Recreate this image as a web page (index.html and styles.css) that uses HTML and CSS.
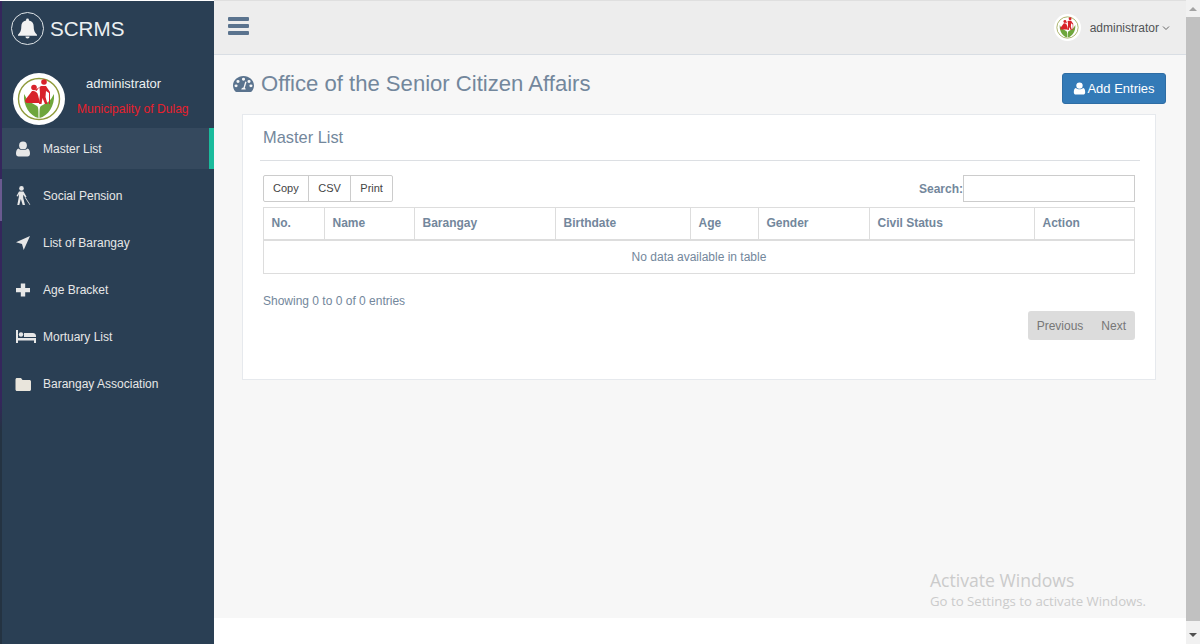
FILE: index.html
```html
<!DOCTYPE html>
<html lang="en">
<head>
  <meta charset="UTF-8" />
  <title>SCRMS</title>
  <link rel="stylesheet" href="styles.css">
</head>
<body>
  <svg class="defs" width="0" height="0">
    <symbol id="logo" viewBox="0 0 52 52">
      <circle cx="26" cy="26" r="26" fill="#fff"/>
      <circle cx="26" cy="26" r="20.500" fill="none" stroke="#8f9a3a" stroke-width="1.400"/>
      <path d="M11 21c2 3 3 6 6 8l7 4c1.500 1 1.500 4 1.500 12C17 43 10 33 11 21z" fill="#6fa63c"/>
      <path d="M41 21c-2 3-3 6-6 8l-7 4c-1.500 1-1.500 4-1.500 12C35 43 42 33 41 21z" fill="#6fa63c"/>
      <circle cx="31" cy="9" r="2.800" fill="#d8232a"/>
      <path d="M28 13h5l4 6v12h-1V20l-3-2-.5 6 2 7H32l-2.500-6-1 6H26l1-10-.5-7-3 4-1.500-1z" fill="#d8232a"/>
      <circle cx="21" cy="14.500" r="2.800" fill="#d8232a"/>
      <path d="M19 18c3-.5 5 1 6 4l2 8H14c-1.500 0-2.200-1.500-1.800-3z" fill="#d8232a"/>
    </symbol>
    <symbol id="user" viewBox="0 0 16 16">
      <circle cx="8" cy="4.400" r="3.900"/>
      <path d="M3.400 7.400C4.600 8.500 6.200 9 8 9s3.400-.5 4.600-1.600C14.400 7.900 15 10.200 15 12.800c0 1.500-1 2.700-2.500 2.700h-9C2 15.500 1 14.300 1 12.800c0-2.600.6-4.900 2.400-5.400z"/>
    </symbol>
  </svg>

  <aside class="sidebar">
    <div class="brand">
      <span class="brand-badge">
        <svg width="19" height="21" viewBox="0 0 20 21" fill="#f2f2f2"><path d="M10 0a1.500 1.500 0 0 1 1.500 1.500v.6C15 2.800 16.500 5.200 16.500 8c0 4.500 1 6.500 3.500 9v1H0v-1c2.500-2.500 3.500-4.500 3.500-9 0-2.800 1.500-5.200 5-5.900v-.6A1.500 1.500 0 0 1 10 0zM7.800 19h4.400a2.200 2 0 0 1-4.400 0z"/></svg>
      </span>
      <span class="brand-name">SCRMS</span>
    </div>
    <div class="profile">
      <svg class="profile-logo"><use href="#logo"/></svg>
      <div class="profile-text">
        <div class="profile-name">administrator</div>
        <div class="profile-town">Municipality of Dulag</div>
      </div>
    </div>
    <nav class="menu">
      <a class="menu-item active">
        <svg class="menu-icon" viewBox="0 0 16 16"><use href="#user"/></svg>
        Master List
      </a>
      <a class="menu-item">
        <svg class="menu-icon tall" viewBox="0 0 16 19"><circle cx="6.500" cy="2.400" r="2.300"/><path d="M4 5.500h4.500l3 5.200-1.300.8-2-2.800v3l1.800 7.300H7.700L5.800 13l-1.500 6H2.300l1.500-8V8L2.800 10.500 1.500 10z"/><path d="M10.500 11.200l4.800 7.500-.6.300-5-7.400z"/></svg>
        Social Pension
      </a>
      <a class="menu-item">
        <svg class="menu-icon" viewBox="0 0 16 16"><path d="M15 1L8.700 15 7 9 1 7.300z"/></svg>
        List of Barangay
      </a>
      <a class="menu-item">
        <svg class="menu-icon" viewBox="0 0 16 16"><path d="M5.800 1.500h4.400V6H15v4.200h-4.800v4.300H5.800v-4.300H1V6h4.800z"/></svg>
        Age Bracket
      </a>
      <a class="menu-item">
        <svg class="menu-icon wide" viewBox="0 0 20 14"><path d="M0 0h2v8h18v5h-2v-2.500H2V13H0z"/><circle cx="5" cy="4.500" r="2.200"/><path d="M8 3h9c1.500 0 3 1 3 3v1H8z"/></svg>
        Mortuary List
      </a>
      <a class="menu-item">
        <svg class="menu-icon folder" viewBox="0 0 16 16"><path d="M.5 3.500C.5 2.700 1.100 2 2 2h4l1.500 2H14.500c.8 0 1.500.7 1.500 1.500v8c0 .8-.7 1.500-1.500 1.500H2c-.9 0-1.500-.7-1.500-1.500z"/></svg>
        Barangay Association
      </a>
    </nav>
  </aside>

  <div class="main">
    <header class="topbar">
      <div class="burger"><span></span><span></span><span></span></div>
      <div class="account">
        <svg class="account-logo"><use href="#logo"/></svg>
        <span>administrator</span>
        <svg class="caret" width="8" height="6" viewBox="0 0 8 6"><path d="M1 1.500l3 3 3-3" fill="none" stroke="#666" stroke-width="1"/></svg>
      </div>
    </header>

    <section class="content">
      <div class="page-title">
        <h1>
          <svg class="gauge" viewBox="0 0 24 20" preserveAspectRatio="none"><path fill-rule="evenodd" d="M12 0C5.400 0 0 5.400 0 12c0 2.700.9 5.200 2.400 7.200.4.500.9.800 1.600.8h16c.7 0 1.200-.3 1.600-.8C23.100 17.200 24 14.700 24 12 24 5.400 18.600 0 12 0zM12 2.200a1.800 1.800 0 1 1 0 3.600 1.800 1.800 0 0 1 0-3.600zM5.700 5a1.800 1.800 0 1 1 0 3.600 1.800 1.800 0 0 1 0-3.600zM18.300 5a1.800 1.800 0 1 1 0 3.600 1.800 1.800 0 0 1 0-3.600zM3.500 10.500a1.800 1.800 0 1 1 0 3.600 1.800 1.800 0 0 1 0-3.600zM20.500 10.500a1.800 1.800 0 1 1 0 3.600 1.800 1.800 0 0 1 0-3.600zM14 7l1.500.5-2 7.300c.6.500 1 1.300 1 2.200H9.500c0-1.500 1.100-2.700 2.500-2.700z"/></svg>
          Office of the Senior Citizen Affairs
        </h1>
        <button class="add-btn"><svg class="add-icon" viewBox="0 0 16 16"><use href="#user"/></svg>Add Entries</button>
      </div>

      <div class="panel">
        <h2>Master List</h2>
        <div class="panel-body">
          <div class="tools">
            <div class="export-btns">
              <a>Copy</a><a>CSV</a><a>Print</a>
            </div>
            <label class="search">Search:<input type="text"></label>
          </div>
          <table class="data">
            <thead>
              <tr>
                <th class="c-no">No.</th>
                <th class="c-name">Name</th>
                <th class="c-brgy">Barangay</th>
                <th class="c-birth">Birthdate</th>
                <th class="c-age">Age</th>
                <th class="c-gender">Gender</th>
                <th class="c-civil">Civil Status</th>
                <th>Action</th>
              </tr>
            </thead>
            <tbody>
              <tr><td colspan="8">No data available in table</td></tr>
            </tbody>
          </table>
          <div class="info">Showing 0 to 0 of 0 entries</div>
          <div class="pager-row">
            <div class="pager"><a>Previous</a><a>Next</a></div>
          </div>
        </div>
      </div>

      <div class="activate">
        <div class="activate-title">Activate Windows</div>
        <div class="activate-sub">Go to Settings to activate Windows.</div>
      </div>
    </section>
    <div class="page-foot"></div>
  </div>

  <div class="scrollbar">
    <span class="arrow up"></span>
    <div class="thumb"></div>
    <span class="arrow down"></span>
  </div>
</body>
</html>
```

FILE: styles.css
```css
* {
  box-sizing: border-box;
}

html,
body {
  height: 100%;
}

body {
  margin: 0;
  display: flex;
  overflow: hidden;
  font-family: "Liberation Sans", Arial, sans-serif;
  font-size: 12px;
  color: #73879c;
  background: #fff;
}

.defs {
  position: absolute;
}

/* sidebar */
.sidebar {
  width: 214px;
  flex: none;
  margin-top: 1px;
  background: #2a3f54;
  border-left: 2px solid;
  border-image: linear-gradient(#35265c 178px, #6a5a90 178px, #6a5a90 220px, #35265c 220px, #35265c 400px, #243342 430px) 1;
}

.brand {
  height: 55px;
  display: flex;
  align-items: center;
  padding-left: 9px;
  gap: 6px;
}

.brand-badge {
  width: 33px;
  height: 33px;
  border: 1.5px solid #dfe5e8;
  border-radius: 50%;
  display: flex;
  align-items: center;
  justify-content: center;
}

.brand-name {
  font-size: 20.6px;
  color: #ecf0f1;
}

.profile {
  height: 72px;
  display: flex;
  padding: 17px 0 0 11px;
}

.profile-logo {
  width: 52px;
  height: 52px;
  flex: none;
}

.profile-text {
  margin-left: 12px;
}

.profile-name {
  font-size: 13px;
  color: #ecf0f1;
  margin: 3px 0 0 9px;
}

.profile-town {
  font-size: 12.1px;
  color: #e8202c;
  margin-top: 11px;
  white-space: nowrap;
}

.menu-item {
  height: 47px;
  display: flex;
  align-items: center;
  padding-left: 13px;
  font-size: 12px;
  color: #e7e7e7;
}

.menu-item.active {
  height: 41px;
  margin-bottom: 3px;
  background: #35495e;
  border-right: 5px solid #1abb9c;
}

.menu-icon {
  width: 16px;
  height: 16px;
  margin-right: 12px;
  fill: #e7e7e7;
}

.menu-icon.tall {
  height: 19px;
}

.menu-icon.wide {
  width: 20px;
  height: 14px;
  margin: 0 7px 0 1px;
}

.menu-icon.folder {
  fill: #e9e5dc;
}

/* top bar */
.main {
  flex: 1;
  min-width: 0;
  display: flex;
  flex-direction: column;
}

.topbar {
  height: 55px;
  flex: none;
  display: flex;
  align-items: center;
  justify-content: space-between;
  padding: 0 16px 0 14px;
  background: #ededed;
  border-top: 1px solid #dfdfdf;
  border-bottom: 1px solid #d9dee4;
}

.burger {
  width: 21px;
}

.burger span {
  display: block;
  height: 3.5px;
  margin-bottom: 3.5px;
  background: #5a738e;
  border-radius: 1px;
}

.account {
  display: flex;
  align-items: center;
  font-size: 12px;
  color: #515356;
}

.account-logo {
  width: 27px;
  height: 27px;
  margin-right: 9px;
}

.caret {
  margin-left: 3px;
}

/* content */
.content {
  flex: 1;
  background: #f7f7f7;
  padding: 0 20px 0 28px;
  position: relative;
}

.page-title {
  height: 59px;
  display: flex;
  justify-content: space-between;
}

h1 {
  margin: 16px 0 0 -9px;
  font-size: 22.1px;
  font-weight: 400;
  color: #73879c;
  display: flex;
  align-items: center;
  height: 26px;
}

.gauge {
  width: 21px;
  height: 16px;
  margin-right: 7px;
  fill: #5a738e;
}

.add-btn {
  margin: 18px 0 0 0;
  width: 104px;
  height: 31px;
  font: inherit;
  font-size: 13px;
  color: #fff;
  background: #337ab7;
  border: 1px solid #2e6da4;
  border-radius: 3px;
  display: flex;
  align-items: center;
  justify-content: center;
}

.add-icon {
  width: 13px;
  height: 13px;
  margin-right: 1px;
  fill: #fff;
}

.panel {
  height: 266px;
  margin-right: 10px;
  background: #fff;
  border: 1px solid #e6e9ed;
  padding: 0 15px 0 17px;
}

h2 {
  margin: 0;
  height: 46px;
  padding: 13px 0 0 3px;
  font-size: 16.4px;
  font-weight: 400;
  color: #73879c;
  border-bottom: 1px solid #dcdfe3;
}

.panel-body {
  padding: 14px 5px 0 3px;
}

.tools {
  display: flex;
  justify-content: space-between;
  align-items: flex-start;
  margin-bottom: 5px;
}

.export-btns {
  display: flex;
  height: 27px;
  border: 1px solid #ccc;
  border-radius: 2px;
  color: #444;
}

.export-btns a {
  padding: 0 9px;
  line-height: 25px;
  font-size: 11px;
  border-left: 1px solid #ccc;
}

.export-btns a:first-child {
  border-left: 0;
}

.export-btns a:nth-child(2) {
  padding: 0 9.5px;
}

.search {
  font-weight: 700;
  display: flex;
  align-items: center;
}

.search input {
  width: 172px;
  height: 27px;
  border: 1px solid #ccc;
  background: #fff;
  padding: 0;
}

.data {
  width: 100%;
  border-collapse: collapse;
  table-layout: fixed;
}

.data th,
.data td {
  border: 1px solid #ddd;
}

.data th {
  height: 32px;
  padding: 0 7.5px;
  text-align: left;
  border-bottom-width: 2px;
  font-size: 12px;
}

.data td {
  height: 34px;
  text-align: center;
}

.c-no { width: 61px; }
.c-name { width: 90px; }
.c-brgy { width: 141px; }
.c-birth { width: 135px; }
.c-age { width: 68px; }
.c-gender { width: 111px; }
.c-civil { width: 165px; }

.info {
  margin-top: 20px;
}

.pager-row {
  display: flex;
  justify-content: flex-end;
  margin-top: 3px;
}

.pager {
  display: flex;
  height: 29px;
  align-items: center;
  gap: 18px;
  padding: 0 9px;
  background: #dcdcdc;
  border-radius: 3px;
  color: #777;
}

/* watermark over the page */
.activate {
  position: absolute;
  left: 716px;
  top: 513px;
  font-family: "Open Sans", sans-serif;
  color: #cbcbcb;
  white-space: nowrap;
}

.activate-title {
  font-size: 17.6px;
}

.activate-sub {
  font-size: 13.2px;
}

.page-foot {
  height: 26px;
  flex: none;
  background: #fff;
}

/* page scrollbar */
.scrollbar {
  width: 14px;
  flex: none;
  padding-top: 1px;
  background: #f1f1f1;
  display: flex;
  flex-direction: column;
  align-items: center;
}

.arrow {
  flex: none;
  width: 0;
  height: 0;
  border-left: 4px solid transparent;
  border-right: 4px solid transparent;
}

.arrow.up {
  margin: 6px 0;
  border-bottom: 4px solid #a3a3a3;
}

.arrow.down {
  margin: 12px 0 7px;
  border-top: 4px solid #505050;
}

.thumb {
  width: 100%;
  flex: 1;
  background: #c1c1c1;
}
```
